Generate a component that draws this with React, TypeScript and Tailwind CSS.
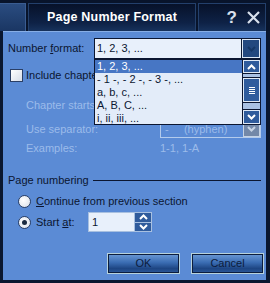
import React from "react";

const font = { fontFamily: '"Liberation Sans", Arial, sans-serif' };

function ChevUp({ className = "" }: { className?: string }) {
  return (
    <svg width="9" height="6" viewBox="0 0 9 6" className={className}>
      <path d="M1 5 L4.5 1.5 L8 5" stroke="currentColor" strokeWidth="2" fill="none" />
    </svg>
  );
}
function ChevDown({ className = "" }: { className?: string }) {
  return (
    <svg width="9" height="6" viewBox="0 0 9 6" className={className}>
      <path d="M1 1 L4.5 4.5 L8 1" stroke="currentColor" strokeWidth="2" fill="none" />
    </svg>
  );
}

function Radio({ checked }: { checked?: boolean }) {
  return (
    <div className="w-[13px] h-[13px] rounded-full border border-[#2a3f66] bg-[radial-gradient(circle_at_40%_40%,#ffffff,#d6dde8)] flex items-center justify-center shrink-0">
      {checked && <div className="w-[5px] h-[5px] rounded-full bg-[#1a2a40]" />}
    </div>
  );
}

function Btn({ children }: { children: React.ReactNode }) {
  return (
    <div className="w-[73px] h-[21px] border border-[#b7d2dc] p-px bg-[#0c1d3d]">
      <div className="w-full h-full bg-[linear-gradient(to_bottom,#6594d2,#3a6cb2_45%,#1d4582_80%,#2a5596)] flex items-center justify-center text-[11px] text-[#0c1c3c]">
        {children}
      </div>
    </div>
  );
}

export default function App() {
  return (
    <div style={font} className="w-[270px] h-[283px] bg-[#0a1730] flex flex-col relative overflow-hidden text-[11px] text-[#0b1631]">
      {/* Title bar */}
      <div className="h-[31px] flex pt-[3px] gap-[2px] pr-[4px] bg-[#08142b] shrink-0">
        <div className="w-[26px] border-t border-r border-[#3a5d92] bg-[linear-gradient(to_bottom,#2a4c80,#1a3663)]" />
        <div className="w-[168px] border-t border-l border-r border-[#23406c] bg-[linear-gradient(to_bottom,#07122a,#0e2246_70%,#17325c)] flex items-center justify-center">
          <span className="text-white font-bold text-[12.5px] tracking-[0.2px]">Page Number Format</span>
        </div>
        <div className="flex-1 border-t border-l border-r border-[#23406c] bg-[linear-gradient(to_bottom,#07122a,#0e2246_70%,#17325c)] flex items-center justify-end gap-[10px] pr-[5px]">
          <span className="text-[#d8e0ec] font-bold text-[17px] leading-none">?</span>
          <svg width="13" height="13" viewBox="0 0 13 13">
            <path d="M1 1 L12 12 M12 1 L1 12" stroke="#d8e0ec" strokeWidth="2.2" />
          </svg>
        </div>
      </div>

      {/* Body */}
      <div className="flex-1 bg-[#5b8bd5] ml-[3px] mr-[4px] mb-[3px] border-t border-[#87aee6] flex flex-col pl-[5px] pt-[6px]">
        {/* Number format */}
        <div className="flex items-center h-[21px]">
          <div className="w-[86px]">
            Number <span className="underline">f</span>ormat:
          </div>
          <div className="w-[167px] h-[21px] border border-[#0b1631] bg-[#e8f0fb] flex items-center">
            <span className="flex-1 pl-[2px]">1, 2, 3, ...</span>
            <div className="w-[18px] h-[19px] border border-[#dfe9f6] bg-[#23487f] outline outline-1 outline-[#0b1631] flex items-center justify-center text-[#163766]">
              <ChevDown />
            </div>
          </div>
        </div>

        {/* Include chapter number */}
        <div className="flex items-center h-[13px] mt-[10px] pl-[2px] gap-[2px]">
          <div className="w-[13px] h-[13px] border border-[#2a3f66] bg-[linear-gradient(135deg,#ffffff,#d6dde8)] shrink-0" />
          <span className="ml-[1px] w-[68px] overflow-hidden whitespace-nowrap">Include chapter number</span>
        </div>

        {/* Chapter starts with style */}
        <div className="flex items-center h-[18px] mt-[14px] pl-[18px] text-[#9bbbea]">
          <span className="w-[68px] overflow-hidden whitespace-nowrap">Chapter starts with style</span>
        </div>

        {/* Use separator */}
        <div className="flex items-center h-[18px] mt-[6px] pl-[18px] text-[#9bbbea]">
          <span className="w-[134px]">Use separator:</span>
          <div className="w-[101px] h-[18px] border border-[#b3cbec] flex items-center">
            <span className="flex-1 pl-[4px]">-&nbsp;&nbsp;&nbsp;&nbsp;&nbsp;(hyphen)</span>
            <div className="w-[17px] h-[16px] bg-[#7388a8] border border-[#c6d3e4] flex items-center justify-center text-[#c6d3e4]">
              <ChevDown />
            </div>
          </div>
        </div>

        {/* Examples */}
        <div className="flex items-center h-[12px] mt-[4px] pl-[18px] text-[#9bbbea]">
          <span className="w-[134px]">Examples:</span>
          <span>1-1, 1-A</span>
        </div>

        {/* Page numbering */}
        <div className="flex items-center h-[14px] mt-[19px]">
          <span>Page numbering</span>
          <div className="flex-1 h-px bg-[#0b1631] ml-[4px] mr-[5px]" />
        </div>

        {/* Continue */}
        <div className="flex items-center h-[13px] mt-[8px] pl-[10px] gap-[5px]">
          <Radio />
          <span>
            <span className="underline">C</span>ontinue from previous section
          </span>
        </div>

        {/* Start at */}
        <div className="flex items-center h-[20px] mt-[4px] pl-[10px]">
          <Radio checked />
          <span className="ml-[5px] w-[52px]">
            Start <span className="underline">a</span>t:
          </span>
          <div className="w-[64px] h-[20px] border border-[#a8c0e0] bg-[#e8f0fb] flex">
            <span className="flex-1 pl-[3px] leading-[18px]">1</span>
            <div className="w-[17px] flex flex-col border-l border-[#a8c0e0]">
              <div className="flex-1 bg-[#2f5b9c] border-b border-[#a8c0e0] flex items-center justify-center text-white">
                <ChevUp />
              </div>
              <div className="flex-1 bg-[#2f5b9c] flex items-center justify-center text-white">
                <ChevDown />
              </div>
            </div>
          </div>
        </div>

        {/* Buttons */}
        <div className="flex justify-end gap-[11px] mt-[21px] pr-[2px]">
          <Btn>OK</Btn>
          <Btn>Cancel</Btn>
        </div>
      </div>

      {/* Dropdown list overlay */}
      <div className="absolute left-[94px] top-[59px] w-[167px] h-[66px] border border-[#0b1631] bg-[#e3ecf9] flex">
        <div className="flex-1 flex flex-col">
          <div className="h-[13px] bg-[#4776c4] text-white pl-[2px] leading-[13px]">1, 2, 3, ...</div>
          <div className="h-[13px] pl-[2px] leading-[13px]">- 1 -, - 2 -, - 3 -, ...</div>
          <div className="h-[13px] pl-[2px] leading-[13px]">a, b, c, ...</div>
          <div className="h-[13px] pl-[2px] leading-[13px]">A, B, C, ...</div>
          <div className="h-[12px] pl-[2px] leading-[13px]">i, ii, iii, ...</div>
        </div>
        <div className="w-[18px] bg-[#a9c1e4] flex flex-col border-l border-[#0b1631]">
          <div className="h-[13px] bg-[#2f5b9c] border border-[#dfe9f6] outline outline-1 outline-[#0b1631] flex items-center justify-center text-white">
            <ChevUp />
          </div>
          <div className="h-[24px] mt-[5px] bg-[#2f5b9c] border border-[#dfe9f6] outline outline-1 outline-[#0b1631] flex flex-col items-center justify-center gap-px">
            <div className="w-[6px] h-px bg-white" />
            <div className="w-[6px] h-px bg-white" />
            <div className="w-[6px] h-px bg-white" />
            <div className="w-[6px] h-px bg-white" />
          </div>
          <div className="flex-1" />
          <div className="h-[14px] bg-[#2f5b9c] border border-[#dfe9f6] outline outline-1 outline-[#0b1631] flex items-center justify-center text-white">
            <ChevDown />
          </div>
        </div>
      </div>
    </div>
  );
}
